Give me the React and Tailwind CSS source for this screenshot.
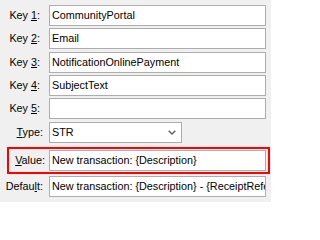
import React from "react";

function Field({ text, className = "" }) {
  return (
    <div
      className={`w-[217px] h-[21px] bg-white border border-[#adadad] flex items-center pl-[2px] overflow-hidden whitespace-nowrap ${className}`}
    >
      {text}
    </div>
  );
}

function Row({ ul, rest, pre = "", text, pr = "pr-[9px]", mt = "" }) {
  return (
    <div className={`flex items-center h-[21px] ${mt}`}>
      <div className={`w-[49px] text-right whitespace-nowrap ${pr}`}>
        {pre}
        <span className="underline">{ul}</span>
        {rest}
      </div>
      <Field text={text} />
    </div>
  );
}

export default function App() {
  return (
    <div className="w-[271px] h-[202px] bg-[#f0f0f0] pt-[5px] font-['Liberation_Sans',sans-serif] text-[10.8px] text-black leading-none overflow-hidden">
      <Row pre="Key " ul="1" rest=":" text="CommunityPortal" />
      <Row pre="Key " ul="2" rest=":" text="Email" mt="mt-[2px]" />
      <Row pre="Key " ul="3" rest=":" text="NotificationOnlinePayment" mt="mt-[3px]" />
      <Row pre="Key " ul="4" rest=":" text="SubjectText" mt="mt-[2px]" />
      <Row pre="Key " ul="5" rest=":" text="" mt="mt-[2px]" />
      <div className="flex items-center h-[21px] mt-[3px]">
        <div className="w-[49px] text-right pr-[6px]">
          <span className="underline">T</span>ype:
        </div>
        <div className="w-[133px] h-[21px] bg-white border border-[#adadad] flex items-center justify-between pl-[2px] pr-[5px]">
          <span>STR</span>
          <svg width="8" height="5" viewBox="0 0 8 5" className="block">
            <path d="M0.7 0.7 L4 4 L7.3 0.7" fill="none" stroke="#606060" strokeWidth="1.4" />
          </svg>
        </div>
      </div>
      <div className="ml-[7px] mt-[4px] w-[263px] h-[27px] border-2 border-[#ff0000] flex items-center">
        <div className="w-[40px] text-right pr-[4px] whitespace-nowrap">
          <span className="underline">V</span>alue:
        </div>
        <Field text="New transaction: {Description}" />
      </div>
      <div className="flex items-center h-[21px] mt-[2px]">
        <div className="w-[49px] text-right pr-[6px] whitespace-nowrap">
          Defau<span className="underline">l</span>t:
        </div>
        <Field text="New transaction: {Description} - {ReceiptReference}" />
      </div>
    </div>
  );
}
